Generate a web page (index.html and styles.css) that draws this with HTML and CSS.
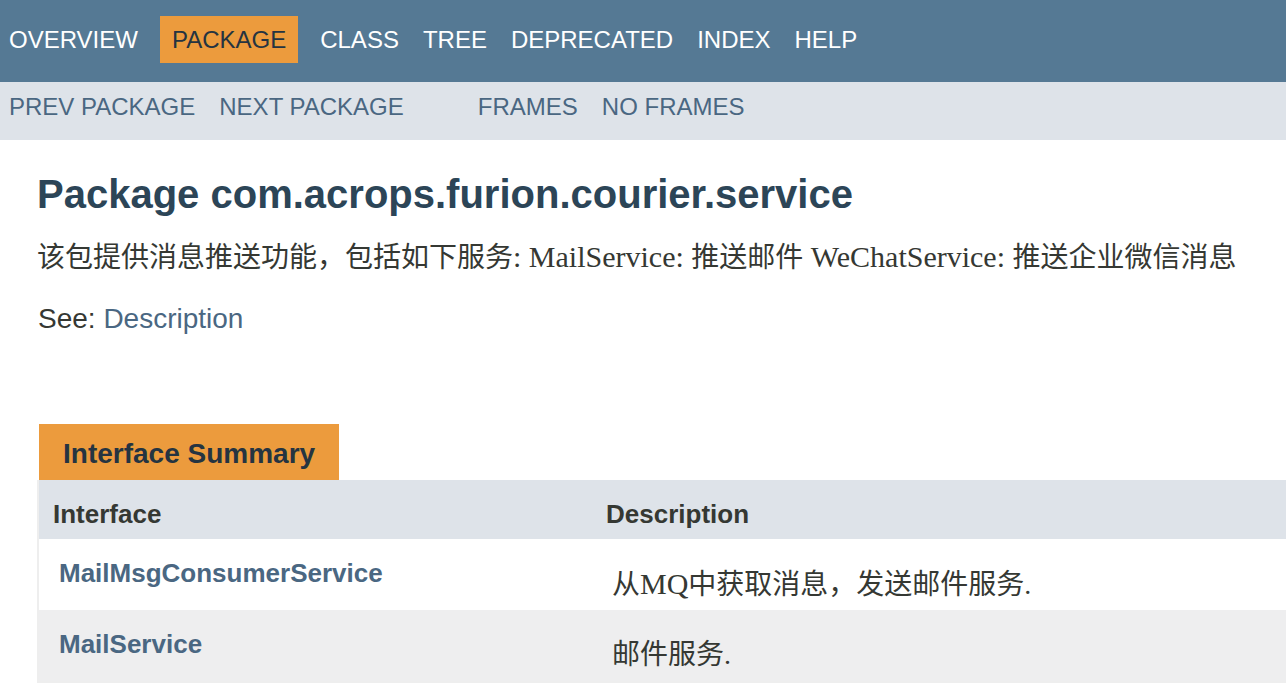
FILE: index.html
```html
<!DOCTYPE html>
<html lang="zh">
<head>
<meta charset="utf-8">
<title>com.acrops.furion.courier.service</title>
<link rel="stylesheet" href="styles.css">
</head>
<body>
<div class="topNav">
  <ul class="navList">
    <li><a href="#">Overview</a></li>
    <li class="navBarCell1Rev">Package</li>
    <li>Class</li>
    <li><a href="#">Tree</a></li>
    <li><a href="#">Deprecated</a></li>
    <li><a href="#">Index</a></li>
    <li><a href="#">Help</a></li>
  </ul>
</div>
<div class="subNav">
  <ul class="navList first">
    <li><a href="#">Prev Package</a></li>
    <li><a href="#">Next Package</a></li>
  </ul>
  <ul class="navList second">
    <li><a href="#">Frames</a></li>
    <li><a href="#">No Frames</a></li>
  </ul>
</div>
<div class="header">
  <h1 class="title">Package com.acrops.furion.courier.service</h1>
  <div class="docSummary">
    <div class="block">该包提供消息推送功能，包括如下服务<span class="latin">: MailService: </span>推送邮件<span class="latin"> WeChatService: </span>推送企业微信消息</div>
  </div>
  <p class="see">See: <a href="#">Description</a></p>
</div>
<div class="contentContainer">
  <div class="captionTab">Interface Summary</div>
  <table class="typeSummary">
    <colgroup>
      <col class="colA">
      <col class="colB">
    </colgroup>
    <thead>
      <tr class="headRow">
        <th class="colFirst">Interface</th>
        <th class="colLast">Description</th>
      </tr>
    </thead>
    <tbody>
      <tr class="altColor">
        <td class="colFirst"><a href="#">MailMsgConsumerService</a></td>
        <td class="colLast"><div class="block">从<span class="latin">MQ</span>中获取消息，发送邮件服务.</div></td>
      </tr>
      <tr class="rowColor">
        <td class="colFirst"><a href="#">MailService</a></td>
        <td class="colLast"><div class="block">邮件服务.</div></td>
      </tr>
    </tbody>
  </table>
</div>
</body>
</html>
```

FILE: styles.css
```css
html, body {
  margin: 0;
  padding: 0;
  background: #ffffff;
}

body {
  font-family: "Liberation Sans", Arial, "Noto Sans CJK SC", sans-serif;
  color: #353833;
  overflow: hidden;
}

a {
  text-decoration: none;
  color: #4a6782;
}

.navList {
  display: flex;
  list-style: none;
  margin: 0;
  padding: 0;
}

.topNav {
  background: #557994;
  height: 82px;
  box-sizing: border-box;
  padding-top: 16px;
}

.topNav .navList {
  margin-left: -3px;
}

.topNav li {
  padding: 10px 12px;
  font-size: 24px;
  line-height: 27px;
  text-transform: uppercase;
  color: #ffffff;
}

.topNav li a {
  color: #ffffff;
}

.topNav li.navBarCell1Rev {
  background: #ec9b3d;
  color: #253441;
  margin: 0 10px;
}

.subNav {
  background: #dee3e9;
  height: 58px;
  box-sizing: border-box;
  padding-top: 11px;
  display: flex;
}

.subNav li {
  padding: 0 12px;
  font-size: 24px;
  line-height: 27px;
  text-transform: uppercase;
}

.subNav .first {
  margin-left: -3px;
  margin-right: 50px;
}

.header {
  padding-left: 37px;
}

.title {
  margin: 31px 0 0;
  font-size: 40px;
  line-height: 46px;
  font-weight: bold;
  color: #2c4557;
}

.docSummary .block {
  margin-top: 22px;
  font-family: "Liberation Serif", "Times New Roman", "Noto Sans CJK SC", serif;
  font-size: 28px;
  line-height: 36px;
  color: #353833;
  white-space: nowrap;
}

.latin {
  font-size: 30px;
}

.see {
  margin: 27px 0 0;
  font-size: 28px;
  line-height: 32px;
  padding-left: 1px;
}

.contentContainer {
  padding-left: 37px;
  margin-top: 89px;
}

.captionTab {
  display: inline-block;
  margin-left: 2px;
  padding: 14px 24px 10px;
  font-size: 28px;
  line-height: 32px;
  font-weight: bold;
  color: #253441;
  background: #ec9b3d;
  white-space: nowrap;
}

.typeSummary {
  border-collapse: separate;
  border-spacing: 0;
  table-layout: fixed;
  width: 1251px;
  border-left: 2px solid #eeeeee;
  border-bottom: 2px solid #eeeeee;
}

.colA {
  width: 553px;
}

.headRow {
  height: 59px;
}

.headRow th {
  background: #dee3e9;
  text-align: left;
  vertical-align: top;
  font-size: 26px;
  line-height: 30px;
  font-weight: bold;
  color: #353833;
  padding: 19px 6px 10px 14px;
  white-space: nowrap;
}

.typeSummary tbody tr {
  height: 71px;
}

.typeSummary td {
  vertical-align: top;
  padding: 19px 0 0 20px;
}

.typeSummary td.colFirst {
  font-size: 26px;
  line-height: 30px;
  font-weight: bold;
  white-space: nowrap;
}

.typeSummary td.colLast .block {
  margin-top: 8px;
  font-family: "Liberation Serif", "Times New Roman", "Noto Sans CJK SC", serif;
  font-size: 28px;
  line-height: 36px;
  color: #353833;
}

.altColor {
  background: #ffffff;
}

.rowColor {
  background: #eeeeef;
}
```
